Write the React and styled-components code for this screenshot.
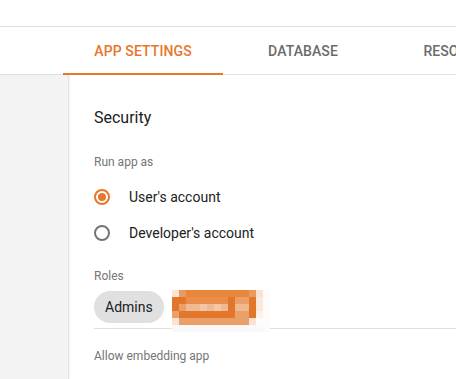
import React from "react";
import styled, { createGlobalStyle } from "styled-components";

const GlobalStyle = createGlobalStyle`
  html, body { margin: 0; padding: 0; background: #ffffff; }
  body { font-family: Roboto, "Noto Sans", Arial, sans-serif; }
  * { box-sizing: border-box; }
`;

const ORANGE = "#e8762b";

const Page = styled.div`
  display: flex;
  flex-direction: column;
  width: 456px;
  height: 379px;
  overflow: hidden;
`;

const TopBar = styled.div`
  height: 27px;
  flex: none;
  border-bottom: 1px solid #dedede;
`;

const TabBar = styled.div`
  display: flex;
  height: 48px;
  flex: none;
  padding-left: 63px;
  border-bottom: 1px solid #e3e3e3;
`;

const Tab = styled.div`
  flex: none;
  width: 160px;
  height: 48px;
  margin-bottom: -1px;
  display: flex;
  align-items: center;
  justify-content: center;
  font-size: 14px;
  font-weight: 500;
  letter-spacing: 0.1px;
  text-transform: uppercase;
  white-space: nowrap;
  color: ${(p) => (p.$active ? ORANGE : "#6b6b6b")};
  border-bottom: 2px solid ${(p) => (p.$active ? ORANGE : "transparent")};
  padding-top: 2px;
`;

const Main = styled.div`
  flex: 1;
  display: flex;
  min-height: 0;
`;

const Sidebar = styled.div`
  width: 69px;
  flex: none;
  background: #f3f3f3;
  border-right: 1px solid #e4e4e4;
  box-shadow: 1px 0 2px rgba(0, 0, 0, 0.06);
`;

const Content = styled.div`
  flex: 1;
  padding: 31px 0 0 25px;
  display: flex;
  flex-direction: column;
`;

const SectionTitle = styled.div`
  font-size: 16px;
  line-height: 24px;
  color: #212121;
`;

const Label = styled.div`
  font-size: 12px;
  line-height: 16px;
  color: #757575;
  margin-top: ${(p) => p.$mt}px;
`;

const RadioGroup = styled.div`
  display: flex;
  flex-direction: column;
  margin-top: 9px;
`;

const RadioRow = styled.label`
  display: flex;
  align-items: center;
  height: 36px;
  gap: 19px;
  font-size: 14px;
  color: #212121;
`;

const RadioCircle = styled.span`
  width: 16px;
  height: 16px;
  border-radius: 50%;
  border: 2px solid ${(p) => (p.$checked ? ORANGE : "#757575")};
  display: flex;
  align-items: center;
  justify-content: center;
  &::after {
    content: "";
    width: 8px;
    height: 8px;
    border-radius: 50%;
    background: ${(p) => (p.$checked ? ORANGE : "transparent")};
  }
`;

const ChipRow = styled.div`
  display: flex;
  align-items: flex-start;
  gap: 8px;
  height: 39px;
  margin-top: 6px;
  border-bottom: 1px solid #e0e0e0;
`;

const Chip = styled.div`
  margin-top: 1px;
  height: 32px;
  padding: 0 11px;
  border-radius: 16px;
  background: #e0e0e0;
  display: flex;
  align-items: center;
  font-size: 14px;
  color: #212121;
`;

const Mosaic = styled.svg`
  flex: none;
  display: block;
`;

const O = "#e8863c", M = "#e99a5c", L = "#fae3d2", D = "#e2772c",
  m1 = "#e98e4a", m2 = "#eaa068", p = "#f1b98f", p2 = "#f4c6a4",
  m3 = "#eb9f68", L2 = "#fbe9dc", L3 = "#fdf2ea", W = "#fefcfb", F = "#f9f9f9";

const GRID = [
  [L, M, O, O, O, O, O, O, O, O, O, M, L, W],
  [D, D, m1, m1, m1, m1, m1, m1, D, m2, m2, D, L2, W],
  [D, m2, p, p, p2, p, p2, p, D, p, p, D, L2, W],
  [m2, D, D, D, D, D, D, D, D, m2, m2, D, L3, W],
  [L, m3, m3, m3, m3, m3, m3, m3, m3, m3, m3, L, W, W],
  [F, F, F, F, F, F, F, F, F, F, F, F, F, W],
];

function RedactedMosaic() {
  return (
    <Mosaic width="98" height="42" viewBox="0 0 98 42">
      {GRID.map((row, r) =>
        row.map((c, i) => (
          <rect key={`${r}-${i}`} x={i * 7} y={r * 7} width="7" height="7" fill={c} />
        ))
      )}
    </Mosaic>
  );
}

export default function App() {
  return (
    <>
      <GlobalStyle />
      <Page>
        <TopBar />
        <TabBar>
          <Tab $active>App Settings</Tab>
          <Tab>Database</Tab>
          <Tab>Resources</Tab>
        </TabBar>
        <Main>
          <Sidebar />
          <Content>
            <SectionTitle>Security</SectionTitle>
            <Label $mt={24}>Run app as</Label>
            <RadioGroup>
              <RadioRow>
                <RadioCircle $checked />
                User's account
              </RadioRow>
              <RadioRow>
                <RadioCircle />
                Developer's account
              </RadioRow>
            </RadioGroup>
            <Label $mt={17}>Roles</Label>
            <ChipRow>
              <Chip>Admins</Chip>
              <RedactedMosaic />
            </ChipRow>
            <Label $mt={19}>Allow embedding app</Label>
          </Content>
        </Main>
      </Page>
    </>
  );
}
